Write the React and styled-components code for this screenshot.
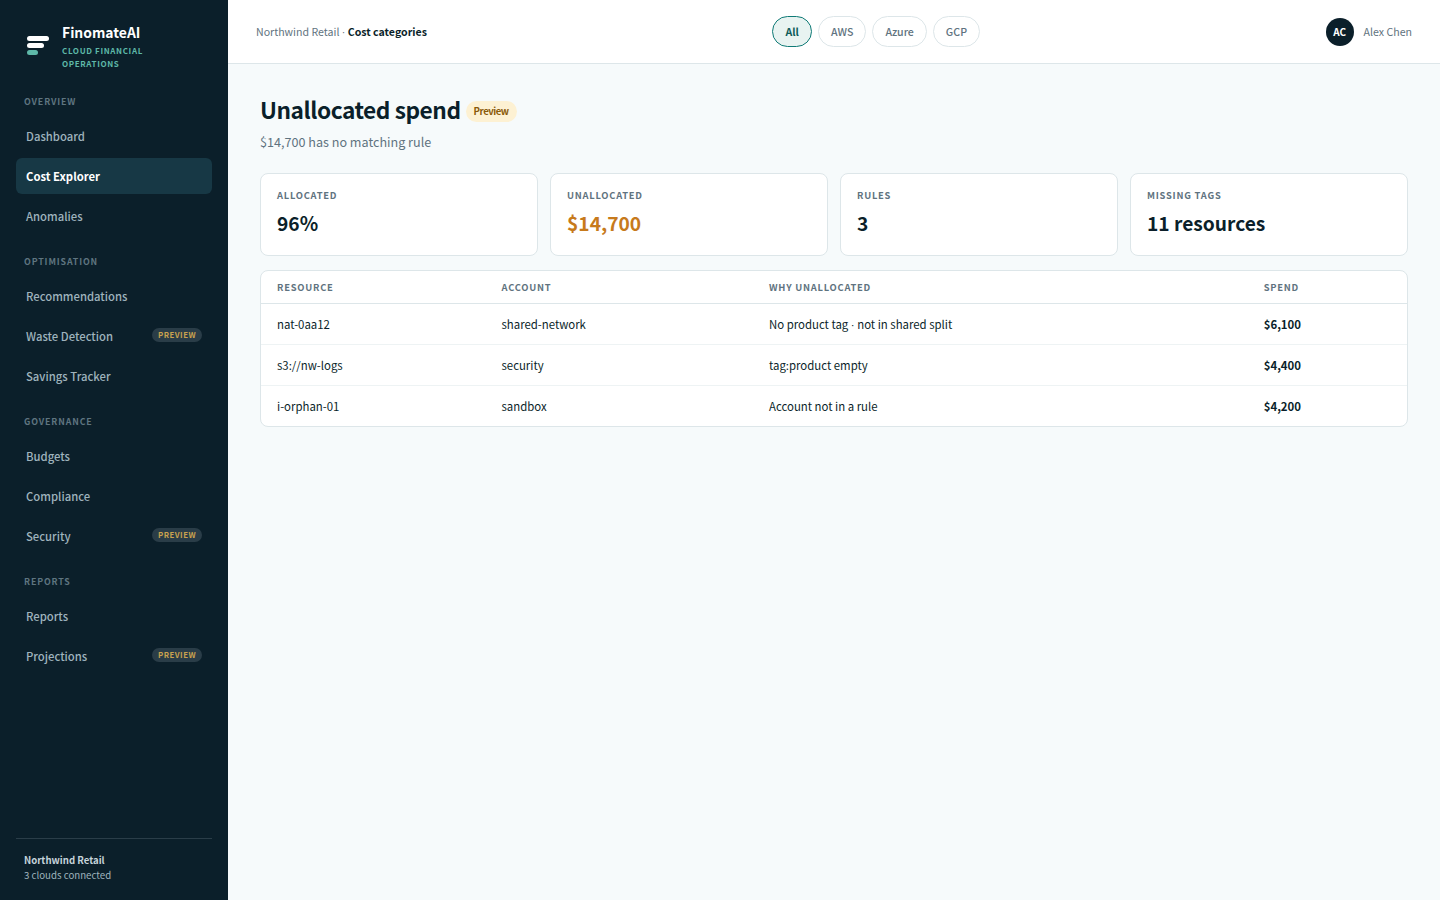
import React from 'react';
import styled, { createGlobalStyle } from 'styled-components';

const GlobalStyle = createGlobalStyle`
  * { box-sizing: border-box; }
  html, body { margin: 0; height: 100%; }
  body {
    font-family: "Noto Sans CJK SC", "Noto Sans", sans-serif;
    background: #f6fafb;
    color: #0b1f2a;
  }
`;

const Dot = styled.span`
  font-family: "Liberation Sans", sans-serif;
`;

const NAV = [
  { title: 'Overview', items: [{ label: 'Dashboard' }, { label: 'Cost Explorer', active: true }, { label: 'Anomalies' }] },
  { title: 'Optimisation', items: [{ label: 'Recommendations' }, { label: 'Waste Detection', preview: true }, { label: 'Savings Tracker' }] },
  { title: 'Governance', items: [{ label: 'Budgets' }, { label: 'Compliance' }, { label: 'Security', preview: true }] },
  { title: 'Reports', items: [{ label: 'Reports' }, { label: 'Projections', preview: true }] },
];

const STATS = [
  { label: 'Allocated', value: '96%' },
  { label: 'Unallocated', value: '$14,700', warn: true },
  { label: 'Rules', value: '3' },
  { label: 'Missing tags', value: '11 resources' },
];

const ROWS = [
  ['nat-0aa12', 'shared-network', <>No product tag <Dot>·</Dot> not in shared split</>, '$6,100'],
  ['s3://nw-logs', 'security', 'tag:product empty', '$4,400'],
  ['i-orphan-01', 'sandbox', 'Account not in a rule', '$4,200'],
];

export default function App() {
  return (
    <Shell>
      <GlobalStyle />
      <Sidebar>
        <Brand>
          <LogoMark width="24" height="22" viewBox="0 0 24 22">
            <rect x="1" y="1" width="22" height="5" rx="2.5" fill="#fff" />
            <rect x="1" y="8" width="17" height="5" rx="2.5" fill="#fff" />
            <rect x="1" y="15" width="11" height="5" rx="2.5" fill="#5eb8a8" />
          </LogoMark>
          <BrandText>
            <BrandName>FinomateAI</BrandName>
            <BrandTag>Cloud Financial Operations</BrandTag>
          </BrandText>
        </Brand>
        <Nav>
          {NAV.map((group) => (
            <NavGroup key={group.title}>
              <GroupTitle>{group.title}</GroupTitle>
              {group.items.map((item) => (
                <NavItem key={item.label} $active={item.active}>
                  {item.label}
                  {item.preview && <NavBadge>Preview</NavBadge>}
                </NavItem>
              ))}
            </NavGroup>
          ))}
        </Nav>
        <SideFooter>
          <OrgName>Northwind Retail</OrgName>
          <OrgMeta>3 clouds connected</OrgMeta>
        </SideFooter>
      </Sidebar>
      <Main>
        <Topbar>
          <Crumbs>
            Northwind Retail <Dot>·</Dot> <strong>Cost categories</strong>
          </Crumbs>
          <Filters>
            <Chip $active>All</Chip>
            <Chip>AWS</Chip>
            <Chip>Azure</Chip>
            <Chip>GCP</Chip>
          </Filters>
          <User>
            <Avatar>AC</Avatar>
            <UserName>Alex Chen</UserName>
          </User>
        </Topbar>
        <Content>
          <Title>
            Unallocated spend
            <TitleBadge>Preview</TitleBadge>
          </Title>
          <Subtitle>$14,700 has no matching rule</Subtitle>
          <StatGrid>
            {STATS.map((s) => (
              <StatCard key={s.label}>
                <StatLabel>{s.label}</StatLabel>
                <StatValue $warn={s.warn}>{s.value}</StatValue>
              </StatCard>
            ))}
          </StatGrid>
          <TableCard>
            <Table>
              <thead>
                <tr>
                  <Th>Resource</Th>
                  <Th>Account</Th>
                  <Th>Why unallocated</Th>
                  <Th>Spend</Th>
                </tr>
              </thead>
              <tbody>
                {ROWS.map((row) => (
                  <tr key={row[0]}>
                    <Td>{row[0]}</Td>
                    <Td>{row[1]}</Td>
                    <Td>{row[2]}</Td>
                    <SpendCell>{row[3]}</SpendCell>
                  </tr>
                ))}
              </tbody>
            </Table>
          </TableCard>
        </Content>
      </Main>
    </Shell>
  );
}

const Shell = styled.div`
  display: flex;
  min-height: 900px;
`;
const Sidebar = styled.aside`
  width: 228px;
  flex-shrink: 0;
  background: #0b1f2a;
  padding: 20px 16px 16px;
  display: flex;
  flex-direction: column;
`;
const Brand = styled.div`
  display: flex;
  align-items: center;
  gap: 12px;
  padding: 0 30px 0 10px;
  margin-bottom: 24px;
`;
const LogoMark = styled.svg`
  flex-shrink: 0;
  margin-top: 2px;
`;
const BrandText = styled.div`
  display: flex;
  flex-direction: column;
`;
const BrandName = styled.div`
  font-size: 13.9px;
  font-weight: 700;
  line-height: 24px;
  color: #fff;
`;
const BrandTag = styled.div`
  font-size: 8px;
  font-weight: 700;
  line-height: 13px;
  letter-spacing: 0.08em;
  text-transform: uppercase;
  color: #5eb8a8;
`;
const Nav = styled.nav`
  flex: 1;
  display: flex;
  flex-direction: column;
  gap: 20px;
`;
const NavGroup = styled.div`
  display: flex;
  flex-direction: column;
  gap: 4px;
`;
const GroupTitle = styled.div`
  font-size: 8.8px;
  font-weight: 700;
  line-height: 16px;
  letter-spacing: 0.1em;
  text-transform: uppercase;
  color: #5f7580;
  padding: 0 8px;
  margin-bottom: 4px;
`;
const NavItem = styled.div`
  height: 36px;
  border-radius: 6px;
  padding: 0 10px;
  display: flex;
  align-items: center;
  justify-content: space-between;
  font-size: 11.3px;
  font-weight: ${(p) => (p.$active ? 700 : 500)};
  color: ${(p) => (p.$active ? '#fff' : '#9fb3bd')};
  background: ${(p) => (p.$active ? '#173845' : 'transparent')};
`;
const NavBadge = styled.span`
  font-size: 7.8px;
  font-weight: 700;
  line-height: 14px;
  letter-spacing: 0.06em;
  text-transform: uppercase;
  color: #c9a24f;
  background: #2a3d48;
  border-radius: 999px;
  padding: 0 6px;
  margin-top: -3px;
`;
const SideFooter = styled.div`
  border-top: 1px solid #2a3d48;
  padding: 14px 8px 1px;
`;
const OrgName = styled.div`
  font-size: 9.6px;
  font-weight: 700;
  line-height: 15px;
  color: #c5d3da;
`;
const OrgMeta = styled.div`
  font-size: 9.7px;
  line-height: 15px;
  color: #9fb3bd;
`;
const Main = styled.div`
  flex: 1;
  min-width: 0;
  display: flex;
  flex-direction: column;
`;
const Topbar = styled.header`
  height: 64px;
  background: #fff;
  border-bottom: 1px solid #dde6e9;
  padding: 0 28px;
  display: flex;
  justify-content: space-between;
  align-items: center;
`;
const Crumbs = styled.div`
  font-size: 10.6px;
  color: #5f7380;
  strong {
    font-weight: 700;
    color: #0b1f2a;
  }
`;
const Filters = styled.div`
  display: flex;
  gap: 6px;
`;
const Chip = styled.button`
  height: 31px;
  padding: 0 12px;
  border-radius: 999px;
  font-family: inherit;
  font-size: 10.6px;
  font-weight: ${(p) => (p.$active ? 700 : 500)};
  color: ${(p) => (p.$active ? '#0f5c5a' : '#5f7380')};
  background: ${(p) => (p.$active ? '#e8f3f1' : '#fff')};
  border: 1px solid ${(p) => (p.$active ? '#0f7a76' : '#dde6e9')};
`;
const User = styled.div`
  display: flex;
  align-items: center;
  gap: 10px;
`;
const Avatar = styled.div`
  width: 28px;
  height: 28px;
  border-radius: 50%;
  background: #0b1f2a;
  color: #fff;
  font-size: 10px;
  font-weight: 700;
  display: flex;
  align-items: center;
  justify-content: center;
`;
const UserName = styled.div`
  font-size: 10.6px;
  color: #5f7380;
`;
const Content = styled.main`
  padding: 28px 32px;
`;
const Title = styled.h1`
  margin: 0;
  display: flex;
  align-items: center;
  gap: 5px;
  font-size: 22.7px;
  font-weight: 700;
  line-height: 36px;
  letter-spacing: -0.02em;
  color: #0b1f2a;
`;
const TitleBadge = styled.span`
  margin-top: 3px;
  font-size: 9.6px;
  font-weight: 700;
  line-height: 21px;
  color: #8a5a0a;
  background: #fdf1d3;
  border-radius: 999px;
  padding: 0 8px;
`;
const Subtitle = styled.p`
  margin: 3px 0 0;
  font-size: 12.6px;
  line-height: 22px;
  color: #5f7380;
`;
const StatGrid = styled.div`
  margin-top: 20px;
  display: grid;
  grid-template-columns: repeat(4, 1fr);
  gap: 12px;
`;
const StatCard = styled.div`
  height: 83px;
  background: #fff;
  border: 1px solid #dde6e9;
  border-radius: 8px;
  padding: 13px 16px;
`;
const StatLabel = styled.div`
  font-size: 9.4px;
  font-weight: 700;
  line-height: 16px;
  letter-spacing: 0.08em;
  text-transform: uppercase;
  color: #5f7380;
`;
const StatValue = styled.div`
  margin-top: 5px;
  font-size: 19.2px;
  font-weight: 600;
  line-height: 30px;
  color: ${(p) => (p.$warn ? '#c77a1c' : '#0b1f2a')};
`;
const TableCard = styled.div`
  margin-top: 14px;
  background: #fff;
  border: 1px solid #dde6e9;
  border-radius: 8px;
  overflow: hidden;
`;
const Table = styled.table`
  width: 100%;
  border-collapse: collapse;
  tbody tr + tr td {
    border-top: 1px solid #eef3f4;
  }
`;
const Th = styled.th`
  height: 32px;
  padding: 0 16px;
  text-align: left;
  font-size: 9.4px;
  font-weight: 700;
  letter-spacing: 0.08em;
  text-transform: uppercase;
  color: #5f7380;
  border-bottom: 1px solid #dde6e9;
`;
const Td = styled.td`
  height: 41px;
  padding: 0 16px;
  font-size: 11.4px;
  color: #0b1f2a;
`;
const SpendCell = styled(Td)`
  font-weight: 600;
`;
